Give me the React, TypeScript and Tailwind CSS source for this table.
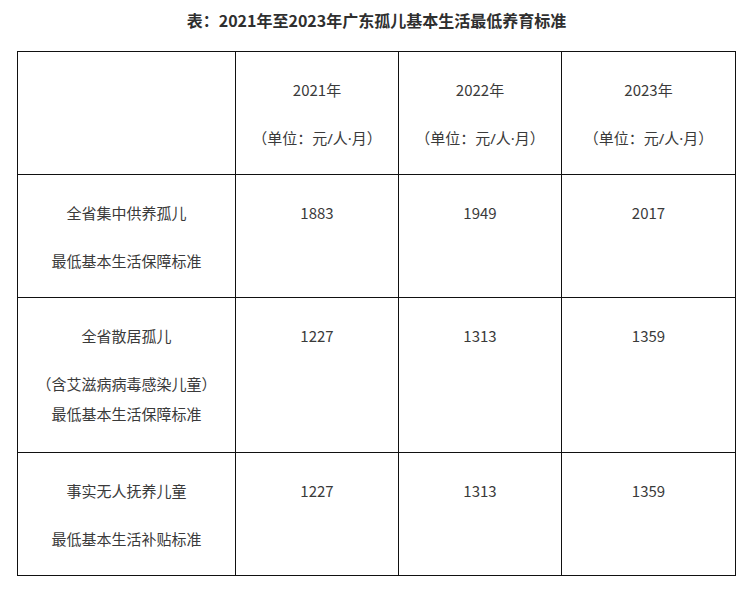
import React from "react";

type Row = {
  label: string[][];
  values: string[];
  height: string;
};

const rows: Row[] = [
  {
    label: [["全省集中供养孤儿"], ["最低基本生活保障标准"]],
    values: ["1883", "1949", "2017"],
    height: "h-[123px]",
  },
  {
    label: [["全省散居孤儿"], ["（含艾滋病病毒感染儿童）", "最低基本生活保障标准"]],
    values: ["1227", "1313", "1359"],
    height: "h-[155px]",
  },
  {
    label: [["事实无人抚养儿童"], ["最低基本生活补贴标准"]],
    values: ["1227", "1313", "1359"],
    height: "h-[123px]",
  },
];

const years = ["2021年", "2022年", "2023年"];

const Cell = ({ paras }: { paras: React.ReactNode[][] }) => (
  <div className="flex flex-col gap-[18px]">
    {paras.map((lines, i) => (
      <p key={i} className="leading-[30px]">
        {lines.map((l, j) => (
          <span key={j} className="block">
            {l}
          </span>
        ))}
      </p>
    ))}
  </div>
);

// slash and middle dot in a latin face so they stay narrow
const Unit = () => (
  <>
    （单位：元<span className="font-['Noto_Sans',sans-serif]">/</span>人
    <span className="font-['Noto_Sans',sans-serif]">·</span>月）
  </>
);

export default function App() {
  return (
    <div className="w-[753px] h-[593px] bg-white text-[#3a3a3a] font-['Noto_Sans_CJK_SC','Noto_Sans',sans-serif]">
      <h1 className="pt-[9px] mb-[20px] text-center text-[16px] leading-[22px] font-bold text-[#2f2f2f]">
        表：2021年至2023年广东孤儿基本生活最低养育标准
      </h1>
      <table className="ml-[17px] w-[718px] table-fixed border-collapse text-[15px] text-center">
        <colgroup>
          <col className="w-[218px]" />
          <col className="w-[163px]" />
          <col className="w-[163px]" />
          <col className="w-[174px]" />
        </colgroup>
        <tbody>
          <tr className="h-[123px]">
            <td className="border border-[#111] align-top pt-[23px]" />
            {years.map((y) => (
              <td key={y} className="border border-[#111] align-top pt-[23px]">
                <Cell paras={[[y], [<Unit />]]} />
              </td>
            ))}
          </tr>
          {rows.map((r, i) => (
            <tr key={i} className={r.height}>
              <td className="border border-[#111] align-top pt-[23px]">
                <Cell paras={r.label} />
              </td>
              {r.values.map((v, j) => (
                <td key={j} className="border border-[#111] align-top pt-[23px]">
                  <Cell paras={[[v]]} />
                </td>
              ))}
            </tr>
          ))}
        </tbody>
      </table>
    </div>
  );
}
